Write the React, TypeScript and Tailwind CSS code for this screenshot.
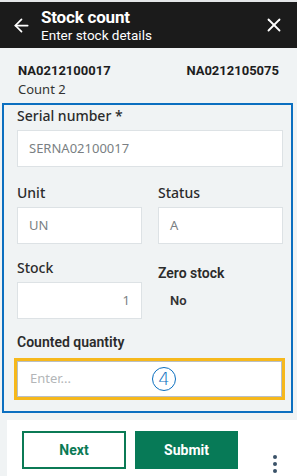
import React from 'react'
import { ArrowLeft, X } from 'lucide-react'

const Field = ({ value, align = 'left' }: { value: string; align?: 'left' | 'right' }) => (
  <div
    className={`h-[37px] bg-white border border-[#dde2e5] flex items-center px-[11px] text-[13px] text-[#7a7f83] ${
      align === 'right' ? 'justify-end' : ''
    }`}
  >
    {value}
  </div>
)

const App: React.FC = () => {
  return (
    <div className="w-[297px] h-[476px] bg-[#f0f3f4] flex flex-col overflow-hidden font-['Noto_Sans',sans-serif]">
      <div className="h-[2px] bg-[#e4e6e8]" />
      {/* header */}
      <header className="h-[46px] bg-[#1b1b1b] flex items-center pl-[11px] pr-[12px] text-white">
        <ArrowLeft size={21} strokeWidth={2} />
        <div className="ml-[9px] flex-1">
          <div className="text-[17px] leading-[19px] font-bold font-['Roboto',sans-serif] tracking-[-0.2px]">Stock count</div>
          <div className="text-[13.5px] leading-[16px] font-['Roboto',sans-serif]">Enter stock details</div>
        </div>
        <X size={22} strokeWidth={2} />
      </header>

      {/* item info */}
      <div className="px-[18px] pt-[15px] h-[55px]">
        <div className="flex justify-between text-[13px] font-bold text-[#1d1d1d] font-['Roboto',sans-serif] leading-[16px]">
          <span>NA0212100017</span>
          <span>NA0212105075</span>
        </div>
        <div className="text-[13px] text-[#333] leading-[16px] mt-[2px]">Count 2</div>
      </div>

      {/* form */}
      <div className="ml-[2px] mr-[4px] h-[310px] border-2 border-[#0b6fc0] pl-[13px] pr-[8px] pt-[2px]">
        <div className="text-[14px] font-medium text-[#2b2b2b] leading-[18px]">Serial number *</div>
        <div className="mt-[5px]">
          <Field value="SERNA02100017" />
        </div>

        <div className="grid grid-cols-2 gap-[16px] mt-[17px]">
          <div>
            <div className="text-[14px] font-medium text-[#2b2b2b] leading-[18px]">Unit</div>
            <div className="mt-[5px]">
              <Field value="UN" />
            </div>
          </div>
          <div>
            <div className="text-[14px] font-medium text-[#2b2b2b] leading-[18px]">Status</div>
            <div className="mt-[5px]">
              <Field value="A" />
            </div>
          </div>
        </div>

        <div className="grid grid-cols-2 gap-[16px] mt-[15px]">
          <div>
            <div className="text-[14px] font-medium text-[#2b2b2b] leading-[18px]">Stock</div>
            <div className="mt-[5px]">
              <Field value="1" align="right" />
            </div>
          </div>
          <div>
            <div className="text-[14px] font-semibold text-[#2b2b2b] leading-[18px] mt-[5px] font-['Roboto',sans-serif]">Zero stock</div>
            <div className="text-[13px] font-semibold text-[#333] mt-[9px] ml-[12px] font-['Roboto',sans-serif]">No</div>
          </div>
        </div>

        <div className="text-[14px] font-semibold text-[#2b2b2b] leading-[18px] mt-[14px] font-['Roboto',sans-serif]">Counted quantity</div>
        <div className="mt-[7px] -ml-[3px] -mr-[2px] border-[3px] border-[#f6b81c]">
          <div className="h-[36px] bg-white border border-[#b9bfc4] flex items-center pl-[12px] relative">
            <span className="text-[13px] text-[#b3b6b8]">Enter...</span>
            <span className="absolute left-[134px] top-[5px] w-[24px] h-[24px] rounded-full border-[1.5px] border-[#0b6fc0] text-[#0b6fc0] flex items-center justify-center text-[18px] leading-none font-['DejaVu_Sans',sans-serif] font-light">
              4
            </span>
          </div>
        </div>
      </div>

      {/* footer */}
      <div className="mt-[7px] ml-[7px] flex-1 bg-white flex items-start pt-[11px] pl-[15px] relative">
        <button className="w-[104px] h-[38px] border-2 border-[#0b7a55] text-[#0b7a55] text-[14px] font-bold font-['Roboto',sans-serif]">
          Next
        </button>
        <button className="ml-[9px] w-[103px] h-[38px] bg-[#077a57] text-white text-[14px] font-bold font-['Roboto',sans-serif]">
          Submit
        </button>
        <div className="absolute left-[266px] top-[35px] flex flex-col gap-[3px]">
          <span className="w-[4px] h-[4px] rounded-full bg-[#3a5268]" />
          <span className="w-[4px] h-[4px] rounded-full bg-[#3a5268]" />
          <span className="w-[4px] h-[4px] rounded-full bg-[#3a5268]" />
        </div>
      </div>
    </div>
  )
}

export default App
